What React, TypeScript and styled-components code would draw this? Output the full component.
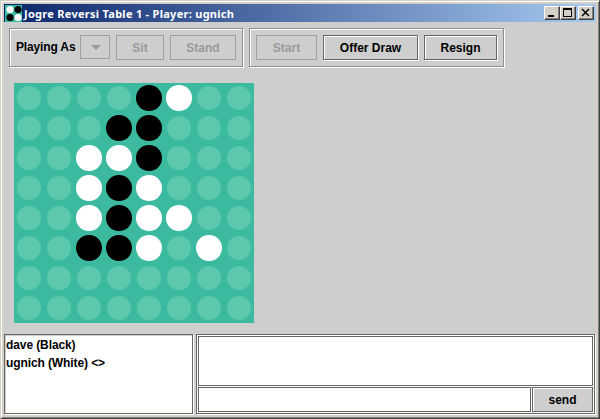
import styled, { createGlobalStyle } from 'styled-components';

const BOARD: string[] = [
  '....bw..',
  '...bb...',
  '..wwb...',
  '..wbw...',
  '..wbww..',
  '..bbw.w.',
  '........',
  '........',
];

const GlobalStyle = createGlobalStyle`
  html, body {
    margin: 0;
    padding: 0;
    background: #d4d0c8;
  }
`;

const Frame = styled.div`
  box-sizing: border-box;
  width: 600px;
  height: 419px;
  display: flex;
  flex-direction: column;
  padding: 3px;
  border: 1px solid;
  border-color: #d4d0c8 #404040 #404040 #d4d0c8;
  box-shadow: inset 1px 1px 0 #ffffff, inset -1px -1px 0 #808080;
  background: #d4d0c8;
  font-family: 'Liberation Sans', Arial, sans-serif;
`;

const TitleBar = styled.div`
  height: 18px;
  display: flex;
  align-items: center;
  padding: 0 2px 0 1px;
  background: linear-gradient(90deg, #0a246a, #a6caf0);
`;

const Logo = styled.svg`
  width: 17px;
  height: 17px;
  flex: none;
  margin-top: 1px;
`;

const TitleText = styled.div`
  flex: 1;
  margin-left: 2px;
  color: #ffffff;
  font: bold 11px 'Noto Sans', sans-serif;
  letter-spacing: 0.28px;
  white-space: nowrap;
`;

const WinButton = styled.div<{ $gap?: number }>`
  box-sizing: border-box;
  width: 16px;
  height: 14px;
  margin-left: ${({ $gap }) => $gap ?? 0}px;
  display: flex;
  align-items: center;
  justify-content: center;
  background: #d4d0c8;
  border: 1px solid;
  border-color: #ffffff #404040 #404040 #ffffff;
  box-shadow: inset -1px -1px 0 #808080;
  svg {
    display: block;
  }
`;

const Content = styled.div`
  flex: 1;
  display: flex;
  flex-direction: column;
  background: #cecece;
`;

const Toolbar = styled.div`
  display: flex;
  gap: 6px;
  padding: 6px 0 0 5px;
`;

const Etched = styled.div`
  box-sizing: border-box;
  height: 39px;
  display: flex;
  align-items: flex-start;
  gap: 6px;
  padding: 6px;
  border: 1px solid #8e8e8e;
  box-shadow: inset 1px 1px 0 #ffffff, 1px 1px 0 #ffffff;
`;

const PlayingLabel = styled.span`
  font-size: 12px;
  font-weight: bold;
  letter-spacing: -0.15px;
  color: #000000;
  line-height: 25px;
  width: 58px;
  white-space: nowrap;
`;

const Combo = styled.div`
  box-sizing: border-box;
  width: 30px;
  height: 24px;
  display: flex;
  align-items: center;
  justify-content: center;
  border: 1px solid #a0a0a0;
  &::after {
    content: '';
    margin-left: 1px;
    border-left: 5px solid transparent;
    border-right: 5px solid transparent;
    border-top: 5px solid #9a9a9a;
  }
`;

const Button = styled.button<{ $width: number; $off?: boolean }>`
  box-sizing: border-box;
  width: ${({ $width }) => $width}px;
  height: 25px;
  padding: 0;
  background: #cecece;
  font: bold 12px 'Liberation Sans', Arial, sans-serif;
  color: ${({ $off }) => ($off ? '#9a9a9a' : '#000000')};
  border: 1px solid ${({ $off }) => ($off ? '#a0a0a0' : '#666666')};
  box-shadow: ${({ $off }) => ($off ? 'none' : 'inset 1px 1px 0 #ffffff, 1px 1px 0 #ffffff')};
`;

const Board = styled.div`
  width: 240px;
  height: 240px;
  margin: 16px 0 11px 10px;
  display: grid;
  grid-template-columns: repeat(8, 30px);
  grid-auto-rows: 30px;
  background: #3cba9f;
`;

const Cell = styled.div`
  display: flex;
  align-items: center;
  justify-content: center;
`;

const Disc = styled.div<{ $kind: string }>`
  width: ${({ $kind }) => ($kind === '.' ? 24 : 25.5)}px;
  height: ${({ $kind }) => ($kind === '.' ? 24 : 25.5)}px;
  border-radius: 50%;
  background: ${({ $kind }) =>
    $kind === 'b' ? '#000000' : $kind === 'w' ? '#ffffff' : '#5cc8ae'};
`;

const Bottom = styled.div`
  flex: 1;
  display: flex;
  gap: 3px;
  padding-right: 1px;
  padding-bottom: 1px;
`;

const UserList = styled.div`
  box-sizing: border-box;
  width: 189px;
  padding: 1px 0 0 1px;
  background: #ffffff;
  border: 1px solid #666666;
  box-shadow: inset 1px 1px 0 #cecece, 1px 1px 0 #ffffff;
  font-size: 12px;
  font-weight: bold;
  letter-spacing: -0.1px;
  color: #000000;
`;

const UserRow = styled.div`
  height: 18px;
  line-height: 18px;
  white-space: nowrap;
`;

const ChatPanel = styled.div`
  flex: 1;
  display: flex;
  flex-direction: column;
  gap: 1px;
  padding: 1px;
  border: 1px solid #666666;
  box-shadow: inset 1px 1px 0 #ffffff, 1px 1px 0 #ffffff;
`;

const ChatLog = styled.div`
  box-sizing: border-box;
  height: 50px;
  background: #ffffff;
  border: 1px solid #666666;
  box-shadow: 1px 1px 0 #ffffff;
`;

const ChatInputRow = styled.div`
  flex: 1;
  display: flex;
  gap: 1px;
`;

const ChatInput = styled.div`
  flex: 1;
  background: #ffffff;
  border: 1px solid #666666;
  box-shadow: 1px 1px 0 #ffffff;
`;

const SendButton = styled.button`
  box-sizing: border-box;
  width: 61px;
  padding: 0;
  background: #cecece;
  border: 1px solid #666666;
  box-shadow: inset 1px 1px 0 #ffffff, 1px 1px 0 #ffffff;
  font: bold 12px 'Liberation Sans', Arial, sans-serif;
  color: #000000;
`;

export default function App() {
  return (
    <Frame>
      <GlobalStyle />
      <TitleBar>
        <Logo viewBox="0 0 17 17">
          <rect width="17" height="17" fill="#3cba9f" />
          <circle cx="5" cy="4.5" r="3.6" fill="#ffffff" />
          <circle cx="13" cy="4.5" r="3.6" fill="#000000" />
          <circle cx="5" cy="12.5" r="3.6" fill="#000000" />
          <circle cx="13" cy="12.5" r="3.6" fill="#ffffff" />
        </Logo>
        <TitleText>Jogre Reversi Table 1 - Player: ugnich</TitleText>
        <WinButton>
          <svg width="10" height="10" viewBox="0 0 10 10">
            <rect x="1" y="7" width="6" height="2" fill="#000" />
          </svg>
        </WinButton>
        <WinButton>
          <svg width="10" height="10" viewBox="0 0 10 10">
            <path d="M0 0h9v9H0z M1 2v6h7V2z" fill="#000" fillRule="evenodd" />
          </svg>
        </WinButton>
        <WinButton $gap={2}>
          <svg width="10" height="10" viewBox="0 0 10 10">
            <path d="M1 1l7 7M8 1l-7 7" stroke="#000" strokeWidth="1.5" />
          </svg>
        </WinButton>
      </TitleBar>
      <Content>
        <Toolbar>
          <Etched>
            <PlayingLabel>Playing As</PlayingLabel>
            <Combo />
            <Button $width={48} $off>Sit</Button>
            <Button $width={66} $off>Stand</Button>
          </Etched>
          <Etched>
            <Button $width={61} $off>Start</Button>
            <Button $width={95}>Offer Draw</Button>
            <Button $width={73}>Resign</Button>
          </Etched>
        </Toolbar>
        <Board>
          {BOARD.flatMap((row, y) =>
            row.split('').map((kind, x) => (
              <Cell key={`${x}-${y}`}>
                <Disc $kind={kind} />
              </Cell>
            )),
          )}
        </Board>
        <Bottom>
          <UserList>
            <UserRow>dave (Black)</UserRow>
            <UserRow>ugnich (White) &lt;&gt;</UserRow>
          </UserList>
          <ChatPanel>
            <ChatLog />
            <ChatInputRow>
              <ChatInput />
              <SendButton>send</SendButton>
            </ChatInputRow>
          </ChatPanel>
        </Bottom>
      </Content>
    </Frame>
  );
}
